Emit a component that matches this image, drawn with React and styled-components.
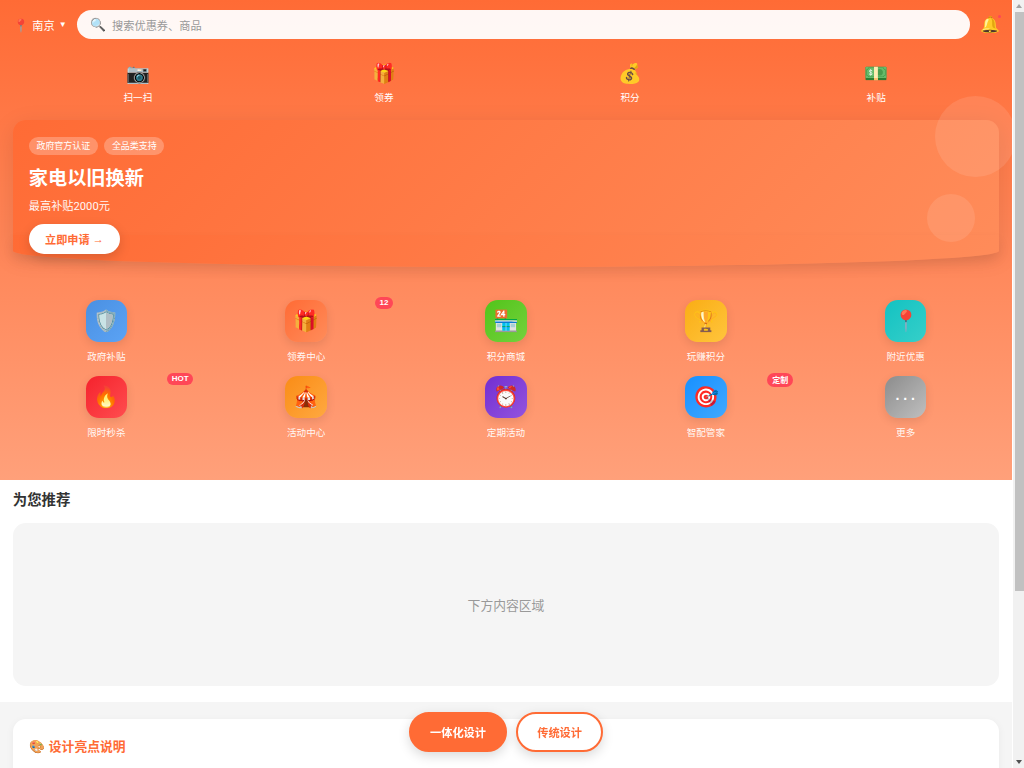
import React from "react";
import styled, { createGlobalStyle } from "styled-components";

const quickActions = [
  { icon: "📷", label: "扫一扫" },
  { icon: "🎁", label: "领券" },
  { icon: "💰", label: "积分" },
  { icon: "💵", label: "补贴" },
];

const services = [
  { icon: "🛡️", label: "政府补贴", from: "#4a90e2", to: "#5ba3f5" },
  { icon: "🎁", label: "领券中心", from: "#ff6b35", to: "#ff8c5a", badge: "12" },
  { icon: "🏪", label: "积分商城", from: "#52c41a", to: "#73d13d" },
  { icon: "🏆", label: "玩赚积分", from: "#faad14", to: "#ffc53d" },
  { icon: "📍", label: "附近优惠", from: "#13c2c2", to: "#36cfc9" },
  { icon: "🔥", label: "限时秒杀", from: "#f5222d", to: "#ff4d4f", badge: "HOT" },
  { icon: "🎪", label: "活动中心", from: "#fa8c16", to: "#ffa940" },
  { icon: "⏰", label: "定期活动", from: "#722ed1", to: "#9254de" },
  { icon: "🎯", label: "智配管家", from: "#1890ff", to: "#40a9ff", badge: "定制" },
  { icon: "···", label: "更多", from: "#8c8c8c", to: "#bfbfbf", more: true },
];

const GlobalStyle = createGlobalStyle`
  * {
    box-sizing: border-box;
  }
  body {
    margin: 0;
    background: #f5f5f5;
    font-family: Roboto, "Noto Sans CJK SC", sans-serif;
    color: #333;
  }
`;

const Shell = styled.div`
  display: flex;
  height: 100vh;
`;

const Page = styled.main`
  flex: 1;
  min-width: 0;
  overflow-x: hidden;
  overflow-y: auto;
`;

const ScrollRail = styled.div`
  display: flex;
  flex-direction: column;
  align-items: center;
  width: 12px;
  padding-left: 1px;
  border-left: 1px solid #fff;
  background: #f1f1f1;
`;

const RailArrow = styled.div`
  flex: none;
  height: 12px;
  width: 100%;
  display: flex;
  align-items: center;
  justify-content: center;
  &::before {
    content: "";
    border-left: 3.5px solid transparent;
    border-right: 3.5px solid transparent;
    border-bottom: ${(p) => (p.$down ? "0" : "4px solid #a3a3a3")};
    border-top: ${(p) => (p.$down ? "4px solid #505050" : "0")};
  }
`;

const RailThumb = styled.div`
  flex: none;
  width: 9px;
  height: 579px;
  background: #c1c1c1;
`;

const RailGap = styled.div`
  flex: 1;
`;

const Hero = styled.section`
  height: 480px;
  padding: 9.6px 12.8px 0;
  background: linear-gradient(180deg, #ff6b35 0%, #ffa07a 100%);
`;

const TopBar = styled.div`
  display: flex;
  align-items: center;
  gap: 9.6px;
  height: 30px;
`;

const City = styled.div`
  display: flex;
  align-items: center;
  gap: 4px;
  width: 54.5px;
  padding-top: 1px;
  color: #fff;
  font-size: 11.2px;
  small {
    margin-top: -2px;
    font-family: "Liberation Sans", sans-serif;
    font-size: 8px;
  }
`;

const Pin = styled.span`
  font-size: 12.8px;
  width: 15.5px;
`;

const SearchBox = styled.div`
  flex: 1;
  display: flex;
  align-items: center;
  gap: 6.4px;
  height: 29.6px;
  padding: 0 12.8px;
  border-radius: 16px;
  background: rgba(255, 255, 255, 0.95);
  font-size: 12.8px;
  input {
    flex: 1;
    padding: 3px 0 0;
    border: none;
    outline: none;
    background: transparent;
    font: inherit;
    font-size: 11.2px;
    &::placeholder {
      color: #999;
    }
  }
`;

const Bell = styled.div`
  position: relative;
  width: 19.2px;
  padding-right: 2px;
  font-size: 16px;
  text-align: center;
  &::after {
    content: "";
    position: absolute;
    top: 0;
    right: -2px;
    width: 3.2px;
    height: 3.2px;
    border-radius: 50%;
    background: #ff4757;
  }
`;

const QuickRow = styled.div`
  display: grid;
  grid-template-columns: repeat(4, 1fr);
  margin-top: 20px;
  padding-left: 2px;
`;

const QuickItem = styled.div`
  display: flex;
  flex-direction: column;
  align-items: center;
  gap: 2.2px;
  color: #fff;
  font-size: 9.6px;
  span:first-child {
    font-size: 19.2px;
    line-height: 28px;
  }
`;

const Banner = styled.div`
  position: relative;
  margin-top: 16px;
  height: 131px;
  padding: 17px 16px;
  border-radius: 12.8px 12.8px 0 0;
  background: linear-gradient(135deg, #ff6b35 0%, #ff8c5a 100%);
  box-shadow: 0 6px 24px rgba(0, 0, 0, 0.1);
  color: #fff;
  &::after {
    content: "";
    position: absolute;
    left: 0;
    right: 0;
    bottom: -16px;
    height: 32px;
    border-radius: 0 0 50% 50%;
    background: linear-gradient(135deg, #ff6b35 0%, #ff8c5a 100%);
    box-shadow: 0 6px 12px rgba(0, 0, 0, 0.08);
  }
`;

const BannerBody = styled.div`
  position: relative;
  z-index: 1;
`;

const Bubble = styled.div`
  position: absolute;
  z-index: 1;
  border-radius: 50%;
  background: rgba(255, 255, 255, 0.1);
  width: ${(p) => p.$size}px;
  height: ${(p) => p.$size}px;
  top: ${(p) => p.$top}px;
  right: ${(p) => p.$right}px;
`;

const Tags = styled.div`
  display: flex;
  gap: 6.4px;
`;

const Tag = styled.span`
  padding: 0 7.68px;
  height: 18px;
  line-height: 18px;
  border-radius: 9.6px;
  background: rgba(255, 255, 255, 0.25);
  font-size: 8.96px;
`;

const BannerTitle = styled.h1`
  margin: 9px 0 0;
  font-size: 19.2px;
  line-height: 29px;
  font-weight: 700;
`;

const BannerSub = styled.p`
  margin: 5px 0 0;
  font-size: 11.2px;
  line-height: 17px;
  opacity: 0.95;
`;

const ApplyButton = styled.button`
  display: block;
  margin-top: 9.5px;
  height: 29.5px;
  width: 91px;
  padding: 0;
  border: none;
  border-radius: 16px;
  background: #fff;
  color: #ff6b35;
  font: inherit;
  font-size: 11.2px;
  font-weight: 700;
  box-shadow: 0 4px 12px rgba(0, 0, 0, 0.15);
`;

const ArrowGlyph = styled.span`
  position: relative;
  top: -1px;
  font-family: "Liberation Sans", sans-serif;
`;

const ServiceGrid = styled.div`
  display: grid;
  grid-template-columns: repeat(5, 1fr);
  gap: 12.8px;
  margin-top: 49px;
`;

const ServiceItem = styled.div`
  position: relative;
  display: flex;
  flex-direction: column;
  align-items: center;
  height: 63.2px;
  color: rgba(255, 255, 255, 0.95);
  font-size: 9.6px;
  label {
    margin-top: 8px;
    line-height: 14px;
  }
`;

const ServiceIcon = styled.div`
  display: flex;
  align-items: center;
  justify-content: center;
  flex: none;
  width: 41.6px;
  height: 42.6px;
  border-radius: 12.8px;
  font-size: 20.8px;
  background: linear-gradient(135deg, ${(p) => p.$from}, ${(p) => p.$to});
  box-shadow: 0 3px 10px rgba(0, 0, 0, 0.1);
  color: #fff;
  ${(p) =>
    p.$more &&
    `
    font-family: "Liberation Sans", sans-serif;
    letter-spacing: 0.9px;
  `}
`;

const Badge = styled.span`
  position: absolute;
  top: -3.2px;
  right: 6.4px;
  padding: 1.6px 4.8px;
  border-radius: 8px;
  background: #ff4757;
  color: #fff;
  font-family: "Liberation Sans", "Noto Sans CJK SC", sans-serif;
  font-size: 8px;
  font-weight: 700;
`;

const Recommend = styled.section`
  height: 222px;
  padding: 0 12.8px;
  background: #fff;
`;

const SectionTitle = styled.h2`
  margin: 0;
  padding-top: 10px;
  font-size: 14.4px;
  line-height: 22px;
  font-weight: 700;
  color: #333;
`;

const Placeholder = styled.div`
  display: flex;
  align-items: center;
  justify-content: center;
  height: 163px;
  margin-top: 11px;
  border-radius: 12.8px;
  background: #f5f5f5;
  color: #999;
  font-size: 12.8px;
`;

const Notes = styled.section`
  padding: 17px 12.8px 16px;
`;

const NotesCard = styled.div`
  height: 235px;
  padding: 16px;
  border-radius: 12.8px;
  background: #fff;
  box-shadow: 0 2px 8px rgba(0, 0, 0, 0.05);
`;

const NotesTitle = styled.h3`
  display: flex;
  align-items: center;
  gap: 4px;
  margin: 0;
  padding-top: 1.5px;
  color: #ff6b35;
  font-size: 12.8px;
  line-height: 20px;
  font-weight: 700;
`;

const Switcher = styled.div`
  position: fixed;
  left: 0;
  right: 12px;
  bottom: 16px;
  display: flex;
  justify-content: center;
  gap: 9.6px;
`;

const SwitchButton = styled.button`
  height: 40px;
  padding: 0 18.8px;
  border: 2px solid #ff6b35;
  border-radius: 20px;
  background: ${(p) => (p.$active ? "#ff6b35" : "#fff")};
  color: ${(p) => (p.$active ? "#fff" : "#ff6b35")};
  font: inherit;
  font-size: 11.2px;
  font-weight: 700;
  box-shadow: 0 4px 12px rgba(0, 0, 0, 0.15);
`;

export default function App() {
  return (
    <Shell>
      <GlobalStyle />
      <Page>
        <Hero>
          <TopBar>
            <City>
              <Pin>📍</Pin>
              <span>南京</span>
              <small>▼</small>
            </City>
            <SearchBox>
              <span>🔍</span>
              <input placeholder="搜索优惠券、商品" />
            </SearchBox>
            <Bell>🔔</Bell>
          </TopBar>

          <QuickRow>
            {quickActions.map((item) => (
              <QuickItem key={item.label}>
                <span>{item.icon}</span>
                <span>{item.label}</span>
              </QuickItem>
            ))}
          </QuickRow>

          <Banner>
            <Bubble $size={81} $top={-24} $right={-17} />
            <Bubble $size={48} $top={74} $right={24} />
            <BannerBody>
              <Tags>
                <Tag>政府官方认证</Tag>
                <Tag>全品类支持</Tag>
              </Tags>
              <BannerTitle>家电以旧换新</BannerTitle>
              <BannerSub>最高补贴2000元</BannerSub>
              <ApplyButton>
                立即申请 <ArrowGlyph>→</ArrowGlyph>
              </ApplyButton>
            </BannerBody>
          </Banner>

          <ServiceGrid>
            {services.map((item) => (
              <ServiceItem key={item.label}>
                <ServiceIcon $from={item.from} $to={item.to} $more={item.more}>
                  {item.icon}
                </ServiceIcon>
                <label>{item.label}</label>
                {item.badge && <Badge>{item.badge}</Badge>}
              </ServiceItem>
            ))}
          </ServiceGrid>
        </Hero>

        <Recommend>
          <SectionTitle>为您推荐</SectionTitle>
          <Placeholder>下方内容区域</Placeholder>
        </Recommend>

        <Notes>
          <NotesCard>
            <NotesTitle>
              <span>🎨</span>
              <span>设计亮点说明</span>
            </NotesTitle>
          </NotesCard>
        </Notes>

        <Switcher>
          <SwitchButton $active>一体化设计</SwitchButton>
          <SwitchButton>传统设计</SwitchButton>
        </Switcher>
      </Page>
      <ScrollRail>
        <RailArrow />
        <RailThumb />
        <RailGap />
        <RailArrow $down />
      </ScrollRail>
    </Shell>
  );
}
